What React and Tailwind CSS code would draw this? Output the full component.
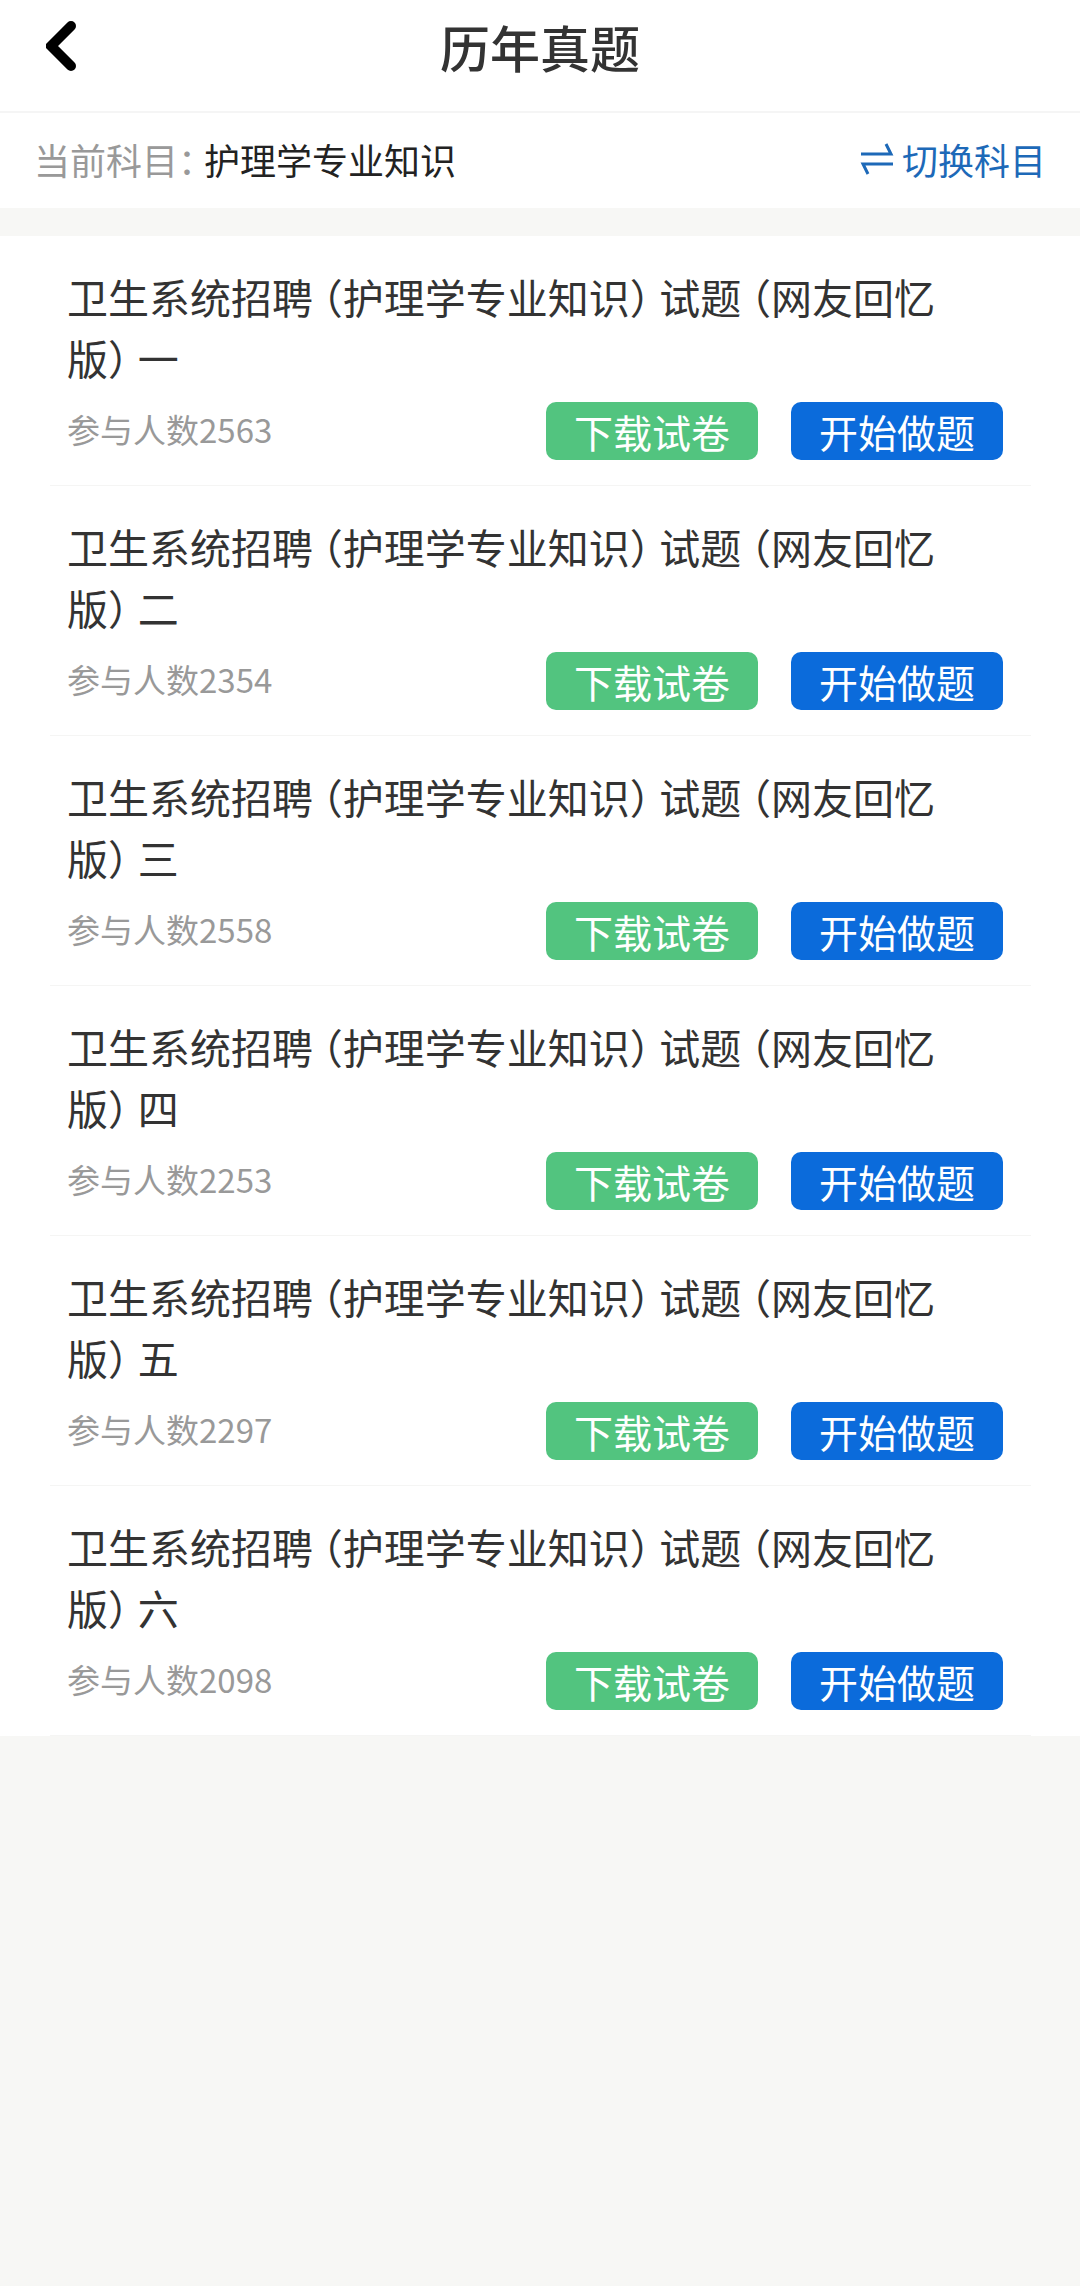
import React from "react";

const papers = [
  { id: 1, no: "一", count: 2563 },
  { id: 2, no: "二", count: 2354 },
  { id: 3, no: "三", count: 2558 },
  { id: 4, no: "四", count: 2253 },
  { id: 5, no: "五", count: 2297 },
  { id: 6, no: "六", count: 2098 },
];

function BackIcon() {
  return (
    <svg viewBox="0 0 30 50" className="w-[30px] h-[50px]" fill="none" aria-hidden="true">
      <path d="M25 5 L5 25 L25 45" stroke="#000" strokeWidth="10" strokeLinecap="round" />
    </svg>
  );
}

function SwitchIcon() {
  return (
    <svg viewBox="0 0 34 32" className="w-[34px] h-8" fill="none" stroke="currentColor" strokeWidth="3" aria-hidden="true">
      <path d="M1 11 H31 L26 1" />
      <path d="M33 21 H3 L8 31" />
    </svg>
  );
}

// halt: brackets and colons take half a character of width
function PaperItem({ paper }) {
  return (
    <li className="ml-[50px] mr-[49px] pl-[17px] pr-7 pt-[30px] pb-[25px] border-b border-[#f5f5f4]">
      <h2 className="pr-5 text-[41px] leading-[61px] text-[#333] [font-feature-settings:'halt']">
        {`卫生系统招聘 （护理学专业知识） 试题 （网友回忆版） ${paper.no}`}
      </h2>
      <div className="mt-[14px] flex items-start justify-between">
        <p className="text-[33px] leading-[54px] text-[#999]">{`参与人数${paper.count}`}</p>
        <div className="flex gap-[33px] text-[39px] leading-[58px] text-white">
          <button type="button" className="w-[212px] h-[58px] rounded-[10px] bg-[#52c47f]">
            下载试卷
          </button>
          <button type="button" className="w-[212px] h-[58px] rounded-[10px] bg-[#0b6bdb]">
            开始做题
          </button>
        </div>
      </div>
    </li>
  );
}

export default function App() {
  return (
    <div
      lang="zh-CN"
      className="min-h-screen bg-[#f7f7f5] font-['Noto_Sans_CJK_SC',sans-serif]"
    >
      <header className="bg-white border-b-2 border-[#f5f5f5] pb-[19px]">
        <div className="grid grid-cols-[1fr_auto_1fr] items-center h-[92px] px-[46px]">
          <button type="button" aria-label="返回" className="justify-self-start">
            <BackIcon />
          </button>
          <h1 className="text-[50px] leading-[72px] font-medium text-[#333]">历年真题</h1>
        </div>
      </header>

      <div className="flex items-center justify-between h-[95px] pb-1 px-[34px] bg-white text-[36px] leading-[52px]">
        <p className="flex gap-2">
          <span className="text-[#999] [font-feature-settings:'halt']">当前科目：</span>
          <span className="text-[#222]">护理学专业知识</span>
        </p>
        <button type="button" className="flex items-center gap-2 text-[#1d69b8]">
          <SwitchIcon />
          切换科目
        </button>
      </div>

      <ul className="mt-7 bg-white">
        {papers.map((paper) => (
          <PaperItem key={paper.id} paper={paper} />
        ))}
      </ul>
    </div>
  );
}
